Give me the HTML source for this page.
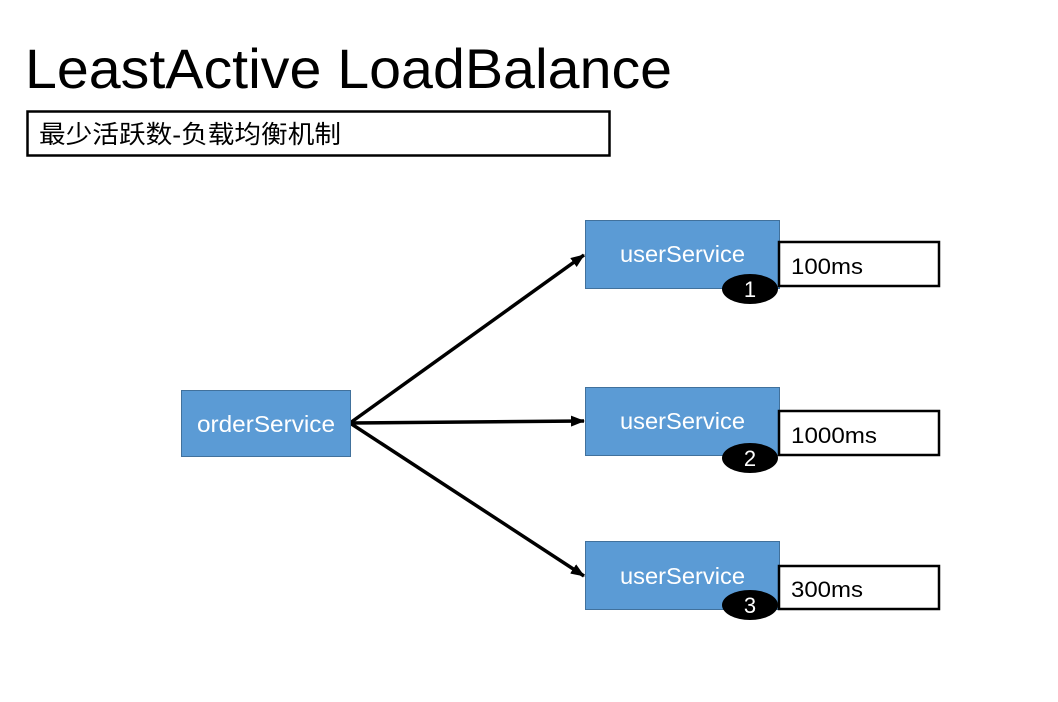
<!DOCTYPE html>
<html><head><meta charset="utf-8"><style>body{margin:0;background:#fff}svg{display:block}</style></head><body>
<svg width="1058" height="702" viewBox="0 0 1058 702" xmlns="http://www.w3.org/2000/svg">
<defs><marker id="a" markerWidth="14" markerHeight="11" refX="13" refY="5.5" orient="auto" markerUnits="userSpaceOnUse"><path d="M0,0L14,5.5L0,11z" fill="#000"/></marker></defs>
<text x="25" y="88" font-family="Liberation Sans, sans-serif" font-size="56" textLength="647" lengthAdjust="spacingAndGlyphs">LeastActive LoadBalance</text>
<rect x="27.5" y="111.5" width="582" height="44" fill="none" stroke="#000" stroke-width="2.5"/>
<text x="39" y="143" font-family="Liberation Sans, Noto Sans CJK SC, sans-serif" font-size="25" textLength="302" lengthAdjust="spacingAndGlyphs">最少活跃数-负载均衡机制</text>
<g stroke="#000" stroke-width="3.5" marker-end="url(#a)">
<line x1="350" y1="423" x2="584" y2="255"/>
<line x1="350" y1="423" x2="584" y2="421"/>
<line x1="350" y1="423" x2="584" y2="576"/>
</g>
<g fill="#5b9bd5" stroke="#41719c" stroke-width="1">
<rect x="181.5" y="390.5" width="169" height="66"/>
<rect x="585.5" y="220.5" width="194" height="68"/>
<rect x="585.5" y="387.5" width="194" height="68"/>
<rect x="585.5" y="541.5" width="194" height="68"/>
</g>
<g fill="#fff" font-family="Liberation Sans, sans-serif" font-size="23">
<text x="197" y="432" textLength="138" lengthAdjust="spacingAndGlyphs">orderService</text>
<text x="620" y="262" textLength="125" lengthAdjust="spacingAndGlyphs">userService</text>
<text x="620" y="429" textLength="125" lengthAdjust="spacingAndGlyphs">userService</text>
<text x="620" y="584" textLength="125" lengthAdjust="spacingAndGlyphs">userService</text>
</g>
<g fill="#fff" stroke="#000" stroke-width="2.5">
<rect x="779" y="242" width="160" height="44"/>
<rect x="779" y="411" width="160" height="44"/>
<rect x="779" y="566" width="160" height="43"/>
</g>
<g font-family="Liberation Sans, sans-serif" font-size="22">
<text x="791" y="274" textLength="72" lengthAdjust="spacingAndGlyphs">100ms</text>
<text x="791" y="443" textLength="86" lengthAdjust="spacingAndGlyphs">1000ms</text>
<text x="791" y="597" textLength="72" lengthAdjust="spacingAndGlyphs">300ms</text>
</g>
<g fill="#000"><ellipse cx="750" cy="289" rx="28" ry="15"/><ellipse cx="750" cy="458" rx="28" ry="15"/><ellipse cx="750" cy="605" rx="28" ry="15"/></g>
<g fill="#fff" font-family="Liberation Sans, sans-serif" font-size="22" text-anchor="middle">
<text x="750" y="297">1</text><text x="750" y="466">2</text><text x="750" y="613">3</text>
</g>
</svg>
</body></html>
